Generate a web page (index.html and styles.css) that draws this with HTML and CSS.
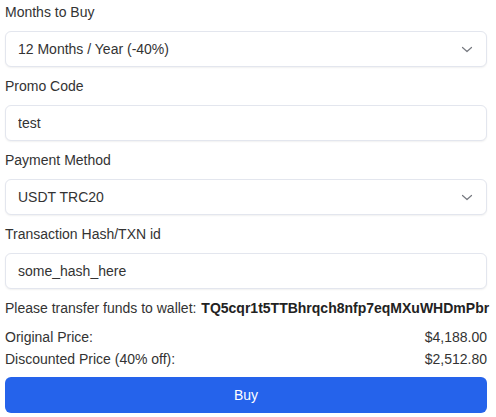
FILE: index.html
```html
<!DOCTYPE html>
<html lang="en">
<head>
<meta charset="utf-8">
<title>Buy subscription</title>
<link rel="stylesheet" href="styles.css">
</head>
<body>
<form class="form">
  <div class="field">
    <label class="label" for="months">Months to Buy</label>
    <div class="select-wrap">
      <select id="months" class="control select"><option>12 Months / Year (-40%)</option></select>
      <svg class="chevron" width="20" height="20" viewBox="0 0 20 20" aria-hidden="true"><path d="M5.5 8.5l4.5 4 4.5-4" fill="none" stroke="#777a80" stroke-width="1.2" stroke-linecap="round" stroke-linejoin="round"/></svg>
    </div>
  </div>
  <div class="field">
    <label class="label" for="promo">Promo Code</label>
    <input id="promo" class="control" type="text" value="test">
  </div>
  <div class="field">
    <label class="label" for="method">Payment Method</label>
    <div class="select-wrap">
      <select id="method" class="control select"><option>USDT TRC20</option></select>
      <svg class="chevron" width="20" height="20" viewBox="0 0 20 20" aria-hidden="true"><path d="M5.5 8.5l4.5 4 4.5-4" fill="none" stroke="#777a80" stroke-width="1.2" stroke-linecap="round" stroke-linejoin="round"/></svg>
    </div>
  </div>
  <div class="field">
    <label class="label" for="txn">Transaction Hash/TXN id</label>
    <input id="txn" class="control" type="text" value="some_hash_here">
  </div>
  <p class="wallet">Please transfer funds to wallet: <strong class="address">TQ5cqr1t5TTBhrqch8nfp7eqMXuWHDmPbr</strong></p>
  <div class="prices">
    <div class="price-row"><span>Original Price:</span><span>$4,188.00</span></div>
    <div class="price-row"><span>Discounted Price (40% off):</span><span>$2,512.80</span></div>
  </div>
  <button class="buy" type="button">Buy</button>
</form>
</body>
</html>
```
FILE: styles.css
```css
* { box-sizing: border-box; }

html, body {
  margin: 0;
  background: #ffffff;
}

body {
  padding: 2px 9px 0 5px;
  font-family: "Liberation Sans", Arial, sans-serif;
  font-size: 14px;
  color: #333333;
}

.form {
  display: flex;
  flex-direction: column;
  width: 482px;
}

.field {
  display: flex;
  flex-direction: column;
  margin-bottom: 9px;
}

.label {
  display: block;
  line-height: 20px;
  margin-bottom: 9px;
}

.control {
  display: block;
  width: 100%;
  height: 36px;
  margin: 0;
  padding: 0 12px;
  border: 1px solid #e3e6ee;
  border-radius: 6px;
  background: #ffffff;
  box-shadow: 0 1px 2px rgba(0, 0, 0, 0.06);
  font-family: inherit;
  font-size: 14px;
  color: #333333;
  outline: none;
}

.select-wrap {
  position: relative;
}

.select {
  appearance: none;
  -webkit-appearance: none;
  padding-right: 36px;
}

.chevron {
  position: absolute;
  right: 10px;
  top: 50%;
  transform: translateY(-50%);
  pointer-events: none;
}

.wallet {
  margin: 0 0 8px;
  line-height: 20px;
  white-space: nowrap;
}

.address {
  font-weight: 700;
  margin-left: 1px;
  color: #222222;
}

.prices {
  display: flex;
  flex-direction: column;
}

.price-row {
  display: flex;
  justify-content: space-between;
  line-height: 22px;
}

.buy {
  margin-top: 7px;
  height: 36px;
  width: 100%;
  border: none;
  border-radius: 6px;
  background: #2563eb;
  color: #ffffff;
  font-family: inherit;
  font-size: 14px;
  cursor: pointer;
}
```
